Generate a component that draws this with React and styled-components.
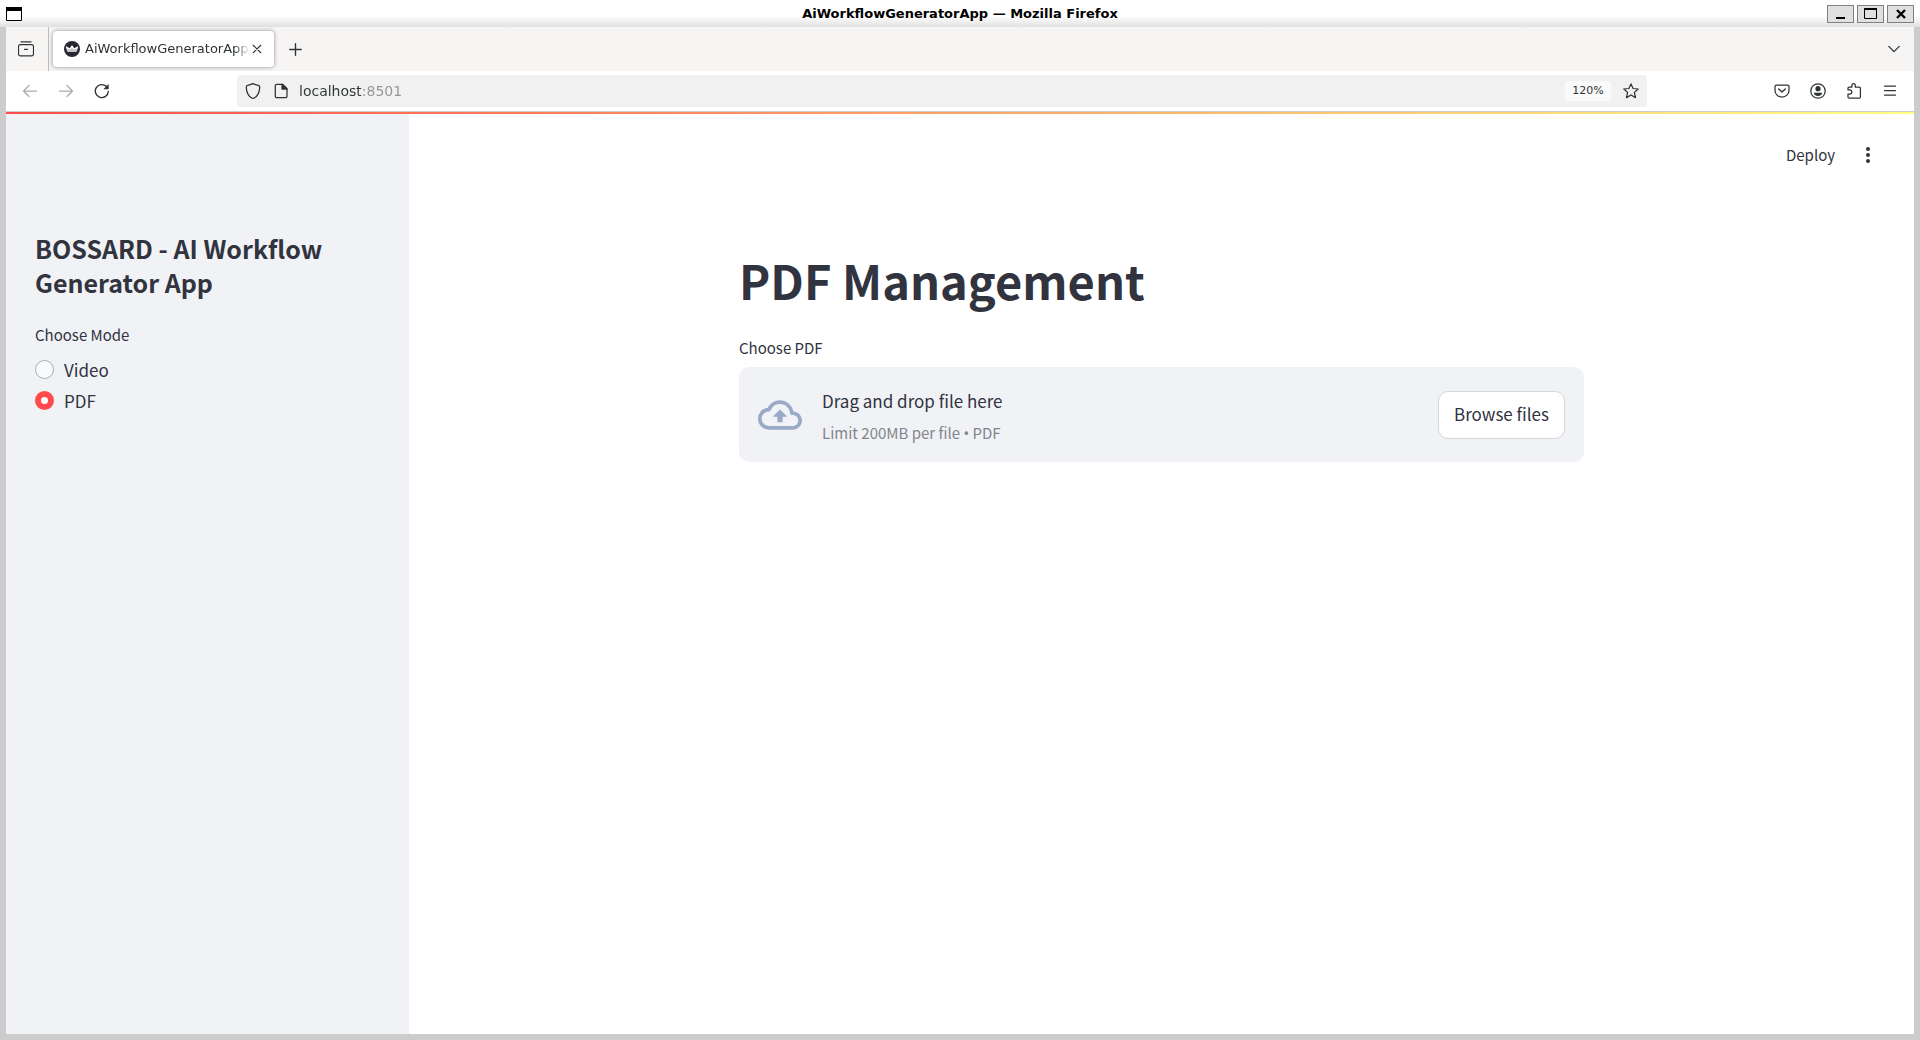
import React, { useRef, useState } from "react";
import styled, { createGlobalStyle } from "styled-components";

const ink = "#31333f";
const chromeInk = "#2e3436";
const panel = "#f0f2f6";
const uiFont = '"DejaVu Sans", sans-serif';
const appFont = '"Noto Sans CJK SC", "Noto Sans", sans-serif';

const GlobalStyle = createGlobalStyle`
  *, *::before, *::after { box-sizing: border-box; }
  body { margin: 0; background: #cccccc; }
  button, input { font: inherit; color: inherit; }
  button { border: 0; padding: 0; margin: 0; background: none; cursor: pointer; }
  svg { display: block; }
`;

const Window = styled.div`
  display: flex;
  flex-direction: column;
  min-height: 100vh;
  background: #cccccc;
  color: ${chromeInk};
  font-family: ${uiFont};
`;

const TitleBar = styled.header`
  display: flex;
  align-items: center;
  justify-content: space-between;
  height: 27px;
  padding: 0 6px;
  background: linear-gradient(#ffffff 60%, #e0e0e0);
`;

const TitleSide = styled.div`
  display: flex;
  flex: 1;
  justify-content: ${(p) => (p.$end ? "flex-end" : "flex-start")};
  gap: 3px;
`;

const WindowTitle = styled.div`
  color: #000000;
  font-size: 13px;
  font-weight: 700;
  line-height: 27px;
`;

const WindowButton = styled.button`
  display: grid;
  place-items: center;
  width: 27px;
  height: 18px;
  border: 1px solid #808080;
  background: #e0e0e0;
`;

const Browser = styled.div`
  display: flex;
  flex: 1;
  flex-direction: column;
  margin: 0 6px 6px;
  background: #ffffff;
`;

const TabStrip = styled.div`
  display: flex;
  align-items: center;
  height: 44px;
  padding-right: 8px;
  background: #f6f5f4;
`;

const FirefoxView = styled.button`
  display: grid;
  place-items: center;
  width: 43px;
  height: 44px;
  padding-right: 2px;
  border-right: 1px solid #bdbdbd;
`;

const Tab = styled.div`
  display: flex;
  align-items: center;
  width: 221px;
  height: 36px;
  margin: 0 8px 0 4px;
  padding: 0 10px 0 11px;
  border-radius: 4px;
  background: #ffffff;
  box-shadow: 0 0 4px rgba(0, 0, 0, 0.42);
`;

const TabLabel = styled.button`
  flex: 1;
  overflow: hidden;
  margin-left: 5px;
  font-size: 13px;
  line-height: 20px;
  text-align: left;
  white-space: nowrap;
  mask-image: linear-gradient(to left, transparent, #000000 16px);
`;

const IconButton = styled.button`
  display: grid;
  flex: none;
  place-items: center;
  width: ${(p) => p.$width || 36}px;
  height: 32px;
  margin-left: ${(p) => (p.$push ? "auto" : "0")};
  opacity: ${(p) => (p.disabled ? 0.4 : 1)};
`;

const NavBar = styled.nav`
  display: flex;
  align-items: center;
  justify-content: space-between;
  height: 41px;
  padding: 0 6px;
  border-bottom: 1px solid #cccccc;
`;

const ButtonGroup = styled.div`
  display: flex;
  flex: none;
`;

const AddressBar = styled.div`
  display: flex;
  flex: 1;
  align-items: center;
  height: 32px;
  margin: 0 117px;
  padding-left: 2px;
  border-radius: 4px;
  background: #f1f1f1;
`;

const AddressInput = styled.input`
  flex: 1;
  min-width: 0;
  margin-left: 4px;
  padding: 0;
  border: 0;
  outline: 0;
  color: transparent;
  background: linear-gradient(90deg, ${chromeInk} 62px, #919494 62px);
  background-clip: text;
  -webkit-background-clip: text;
  font-size: 14px;
  line-height: 20px;
`;

const ZoomBadge = styled.button`
  width: 46px;
  height: 20px;
  margin-right: 4px;
  border-radius: 3px;
  background: #fafafa;
  font-size: 11px;
  line-height: 20px;
`;

const Decoration = styled.div`
  height: 2px;
  background: linear-gradient(90deg, #ff4b4b, #fffd80);
`;

const Page = styled.div`
  display: flex;
  flex: 1;
  color: ${ink};
  font-family: ${appFont};
`;

const Sidebar = styled.aside`
  flex: none;
  width: 403px;
  padding: 117px 29px 40px;
  background: ${panel};
`;

const SidebarTitle = styled.h2`
  margin: 0 0 24px;
  font-size: 25px;
  font-weight: 600;
  line-height: 34px;
`;

const ModeGroup = styled.fieldset`
  display: flex;
  flex-direction: column;
  margin: 0;
  padding: 0;
  border: 0;
`;

const smallText = `
  font-size: 15px;
  line-height: 24px;
`;

const ModeLegend = styled.legend`
  margin-bottom: 7px;
  padding: 0;
  ${smallText}
`;

const ModeOption = styled.label`
  display: flex;
  align-items: center;
  gap: 10px;
  height: 31px;
  font-size: 17px;
  line-height: 28px;
`;

const Radio = styled.input`
  appearance: none;
  width: 19px;
  height: 19px;
  margin: 0;
  border: 1px solid #a9abb1;
  border-radius: 50%;
  background: #f9fafc;

  &:checked {
    border: 6px solid #ff4b4b;
    background: #ffffff;
  }
`;

const Main = styled.main`
  flex: 1;
  min-width: 0;
`;

const Toolbar = styled.div`
  display: flex;
  align-items: center;
  justify-content: flex-end;
  height: 82px;
  padding-right: 28px;
`;

const DeployButton = styled.button`
  margin-right: 15px;
  ${smallText}
`;

const Block = styled.div`
  width: 100%;
  max-width: 845px;
  margin: 0 auto;
  padding: 52px 0 40px;
`;

const PageTitle = styled.h1`
  margin: 0 0 24px;
  font-size: 47px;
  font-weight: 700;
  line-height: 64px;
`;

const UploadLabel = styled.label`
  display: block;
  margin-bottom: 7px;
  ${smallText}
`;

const HiddenFile = styled.input`
  position: absolute;
  width: 1px;
  height: 1px;
  overflow: hidden;
  clip-path: inset(50%);
`;

const Dropzone = styled.section`
  display: flex;
  align-items: center;
  height: 95px;
  padding: 0 19px;
  border-radius: 10px;
  background: ${panel};
`;

const DropText = styled.div`
  flex: 1;
  margin-left: 20px;
  padding-top: 2px;
`;

const DropTitle = styled.div`
  margin-bottom: 6px;
  font-size: 17px;
  line-height: 28px;
`;

const DropHint = styled.div`
  color: #83858d;
  ${smallText}
`;

const Bullet = styled.span`
  font-family: "Noto Sans", sans-serif;
`;

const BrowseButton = styled.button`
  height: 48px;
  padding: 0 15px 2px;
  border: 1px solid #d6d6d9;
  border-radius: 10px;
  background: #ffffff;
  font-size: 17px;
  line-height: 28px;
`;

function Icon({ size = 16, children, ...rest }) {
  return (
    <svg
      width={size}
      height={size}
      viewBox="0 0 16 16"
      fill="none"
      stroke="currentColor"
      strokeWidth="1.25"
      strokeLinecap="round"
      strokeLinejoin="round"
      aria-hidden="true"
      {...rest}
    >
      {children}
    </svg>
  );
}

const MODES = ["Video", "PDF"];

export default function App() {
  const [mode, setMode] = useState("PDF");
  const [address, setAddress] = useState("localhost:8501");
  const fileRef = useRef(null);

  return (
    <>
      <GlobalStyle />
      <Window>
        <TitleBar>
          <TitleSide>
            <svg width="16" height="14" viewBox="0 0 16 14" aria-hidden="true">
              <path d="M.5 .5h15v13H.5z" fill="#fff" stroke="#000" />
              <path d="M0 0h16v4H0z" fill="#000" />
            </svg>
          </TitleSide>
          <WindowTitle>AiWorkflowGeneratorApp — Mozilla Firefox</WindowTitle>
          <TitleSide $end>
            <WindowButton aria-label="Minimize">
              <svg width="13" height="12"><path d="M2 9h9v2H2z" /></svg>
            </WindowButton>
            <WindowButton aria-label="Maximize">
              <svg width="13" height="12">
                <path d="M.5 1h12v9.5H.5z" fill="none" stroke="#000" />
                <path d="M0 0h13v2H0z" />
              </svg>
            </WindowButton>
            <WindowButton aria-label="Close">
              <svg width="12" height="12"><path d="M2 2l8 8M10 2l-8 8" stroke="#000" strokeWidth="2.4" /></svg>
            </WindowButton>
          </TitleSide>
        </TitleBar>

        <Browser>
          <TabStrip>
            <FirefoxView aria-label="Firefox View">
              <Icon strokeWidth="1.2">
                <path d="M3 .9h10M2.5 3.6h11a2 2 0 0 1 2 2v7.300a2 2 0 0 1-2 2h-11a2 2 0 0 1-2-2V5.600a2 2 0 0 1 2-2zM6.500 8.300h3" />
              </Icon>
            </FirefoxView>
            <Tab>
              <svg width="16" height="16" viewBox="0 0 16 16" aria-hidden="true">
                <circle cx="8" cy="8" r="8" fill="#262730" />
                <path d="M1.800 5.600c-.1-.2.1-.4.300-.3l3.600 2 2-2.700a.4.4 0 0 1 .6 0l2 2.700 3.600-2c.2-.1.4.1.300.3L12.900 10c-.2.500-.6.800-1 .800H4.100c-.5 0-.9-.3-1-.8z" fill="#fff" />
                <path d="M2.600 7.600l3.200 1L8 7l2.200 1.600 3.200-1-.8 2.900c-.1.200-.4.300-.7.300H4.100c-.3 0-.6-.1-.7-.3z" fill="#c4c4c9" />
              </svg>
              <TabLabel>AiWorkflowGeneratorApp</TabLabel>
              <IconButton $width={14} aria-label="Close tab">
                <Icon size={10} strokeWidth="1.700"><path d="M2 2l12 12M14 2L2 14" /></Icon>
              </IconButton>
            </Tab>
            <IconButton $width={26} aria-label="New tab">
              <Icon size={13}><path d="M8 1v14M1 8h14" strokeWidth="1.700" /></Icon>
            </IconButton>
            <IconButton $width={24} $push aria-label="List all tabs">
              <Icon size={14}><path d="M2 5l6 6 6-6" strokeWidth="1.500" /></Icon>
            </IconButton>
          </TabStrip>

          <NavBar>
            <ButtonGroup>
              <IconButton disabled aria-label="Back">
                <Icon><path d="M14.500 8H1.600M7 2.500L1.500 8 7 13.500" /></Icon>
              </IconButton>
              <IconButton disabled aria-label="Forward">
                <Icon><path d="M1.500 8h12.900M9 2.500L14.500 8 9 13.500" /></Icon>
              </IconButton>
              <IconButton aria-label="Reload">
                <Icon strokeWidth="1.400">
                  <path d="M14.300 8.500a6.500 6.500 0 1 1-2.100-5.200l1.500 1.500" />
                  <path d="M14.600 1v5.300H9.300z" fill="currentColor" stroke="none" />
                </Icon>
              </IconButton>
            </ButtonGroup>
            <AddressBar>
              <IconButton $width={28} aria-label="Tracking protection">
                <Icon><path d="M8 .7l5.800 2c.6.200.9.600.9 1.200 0 5-1.700 8.800-5.500 11.100a2.200 2.200 0 0 1-2.400 0C3 12.700 1.300 8.900 1.300 3.900c0-.6.3-1 .9-1.200z" /></Icon>
              </IconButton>
              <IconButton $width={28} aria-label="Site information">
                <Icon>
                  <path d="M3.800 1.300h5.700L14 5.800v7.400a1.500 1.500 0 0 1-1.500 1.500H3.800a1.500 1.500 0 0 1-1.500-1.500V2.800a1.500 1.500 0 0 1 1.500-1.500z" />
                  <path d="M9 1.300V6h5z" fill="currentColor" />
                </Icon>
              </IconButton>
              <AddressInput
                aria-label="Address"
                value={address}
                onChange={(e) => setAddress(e.target.value)}
              />
              <ZoomBadge>120%</ZoomBadge>
              <IconButton $width={32} aria-label="Bookmark this page">
                <Icon><path d="M8 .9l2.100 4.600 5.100.5-3.800 3.400 1.100 5.200L8 12l-4.500 2.600 1.100-5.200L.8 6l5.100-.5z" /></Icon>
              </IconButton>
            </AddressBar>
            <ButtonGroup>
              <IconButton aria-label="Pocket">
                <Icon>
                  <path d="M2.500 2h11a1.500 1.500 0 0 1 1.500 1.500v4a7 6.500 0 0 1-14 0v-4A1.500 1.500 0 0 1 2.500 2z" />
                  <path d="M4.700 5.900L8 9l3.300-3.100" strokeWidth="1.400" />
                </Icon>
              </IconButton>
              <IconButton aria-label="Account">
                <Icon>
                  <circle cx="8" cy="8" r="7.200" />
                  <circle cx="8" cy="5.700" r="2.600" fill="currentColor" stroke="none" />
                  <path d="M3.800 9.700h8.400c0 1.800-1.800 3.200-4.200 3.200s-4.200-1.400-4.200-3.200z" fill="currentColor" stroke="none" />
                </Icon>
              </IconButton>
              <IconButton aria-label="Extensions">
                <Icon>
                  <path d="M2 6.900V5.200A1.200 1.200 0 0 1 3.200 4h2.700V2.300a1.700 1.700 0 0 1 3.400 0V4h3.900a1.200 1.200 0 0 1 1.200 1.200v8.800a1.200 1.200 0 0 1-1.200 1.200H3.200A1.200 1.200 0 0 1 2 14v-3h1.700a2 2 0 0 0 0-4.100z" />
                </Icon>
              </IconButton>
              <IconButton aria-label="Application menu">
                <Icon><path d="M2.500 3h11M2.500 7.500h11M2.500 12h11" /></Icon>
              </IconButton>
            </ButtonGroup>
          </NavBar>

          <Decoration />
          <Page>
            <Sidebar>
              <SidebarTitle>BOSSARD - AI Workflow Generator App</SidebarTitle>
              <ModeGroup>
                <ModeLegend>Choose Mode</ModeLegend>
                {MODES.map((name) => (
                  <ModeOption key={name}>
                    <Radio
                      type="radio"
                      name="mode"
                      value={name}
                      checked={mode === name}
                      onChange={() => setMode(name)}
                    />
                    {name}
                  </ModeOption>
                ))}
              </ModeGroup>
            </Sidebar>

            <Main>
              <Toolbar>
                <DeployButton>Deploy</DeployButton>
                <IconButton aria-label="Main menu">
                  <svg width="16" height="18" viewBox="0 0 16 18" fill={ink} aria-hidden="true">
                    <circle cx="8" cy="3" r="2" />
                    <circle cx="8" cy="9" r="2" />
                    <circle cx="8" cy="15" r="2" />
                  </svg>
                </IconButton>
              </Toolbar>
              <Block>
                <PageTitle>PDF Management</PageTitle>
                <UploadLabel htmlFor="pdf-file">Choose PDF</UploadLabel>
                <HiddenFile id="pdf-file" ref={fileRef} type="file" accept="application/pdf" tabIndex={-1} />
                <Dropzone>
                  <svg width="44" height="44" viewBox="0 0 24 24" fill="#9aa9c8" aria-hidden="true">
                    <path d="M19.350 10.040A7.490 7.490 0 0 0 12 4C9.110 4 6.600 5.640 5.350 8.040A5.994 5.994 0 0 0 0 14c0 3.310 2.690 6 6 6h13c2.760 0 5-2.240 5-5 0-2.640-2.050-4.780-4.650-4.960zM19 18H6c-2.210 0-4-1.790-4-4 0-2.050 1.530-3.760 3.560-3.970l1.070-.11.5-.95A5.469 5.469 0 0 1 12 6c2.620 0 4.880 1.860 5.390 4.430l.3 1.500 1.530.11A2.980 2.980 0 0 1 22 15c0 1.650-1.350 3-3 3zM8 13h2.550v3h2.900v-3H16l-4-4z" />
                  </svg>
                  <DropText>
                    <DropTitle>Drag and drop file here</DropTitle>
                    <DropHint>
                      Limit 200MB per file <Bullet>•</Bullet> PDF
                    </DropHint>
                  </DropText>
                  <BrowseButton onClick={() => fileRef.current?.click()}>Browse files</BrowseButton>
                </Dropzone>
              </Block>
            </Main>
          </Page>
        </Browser>
      </Window>
    </>
  );
}
